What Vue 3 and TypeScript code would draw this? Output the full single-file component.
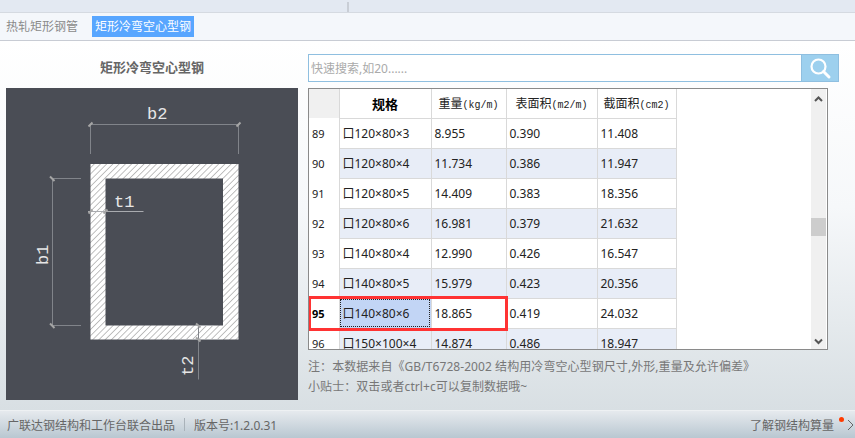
<template>
  <div class="app">
    <div class="top-strip"><span class="top-tick"></span></div>
    <div class="tabs">
      <span class="tab">热轧矩形钢管</span>
      <span class="tab active">矩形冷弯空心型钢</span>
    </div>

    <div class="main">
      <div class="left">
        <div class="title">矩形冷弯空心型钢</div>
        <div class="diagram">
          <svg width="292" height="312" viewBox="6 88 292 312">
            <defs>
              <pattern id="hatch" width="4.400" height="4.400" patternUnits="userSpaceOnUse" patternTransform="rotate(45)">
                <rect width="4.400" height="4.400" fill="#fff" />
                <line x1="2.200" y1="0" x2="2.200" y2="4.400" stroke="#b8b8b8" stroke-width="0.900" />
              </pattern>
            </defs>
            <path
              d="M90.500 164H238.500V339.500H90.500Z M105.500 178.500V325.500H223V178.500Z"
              fill="url(#hatch)"
              fill-rule="evenodd"
            />
            <g stroke="#81848a" stroke-width="1" fill="none">
              <path d="M90.500 124.500H238.500M90.500 124V154M238.500 124V154" />
              <path d="M52.500 178.500V325.500M52 178.500H81M52 325.500H81" />
              <path d="M88 211.500H143.500" stroke="#a9abaf" />
              <path d="M198.500 325V379.500" />
              <path d="M195 325.500H214M180 339.500H223" stroke="#a9abaf" />
            </g>
            <g stroke="#a5a5a5" stroke-width="2">
              <path d="M88.500 126.500L92.500 122.500M236.500 126.500L240.500 122.500" />
              <path d="M50 176.500L54.500 181M50 323.500L54.500 328" />
              <path d="M88.500 213.500L92.500 209.500M103.500 213.500L107.500 209.500" />
              <path d="M196 323.500L200.500 327.500M196 337.500L200.500 341.500" />
            </g>
            <g class="dim-text">
              <text x="147" y="119">b2</text>
              <text x="114" y="207">t1</text>
              <text transform="translate(48 265) rotate(-90)">b1</text>
              <text transform="translate(193 376) rotate(-90)">t2</text>
            </g>
          </svg>
        </div>
      </div>

      <div class="right">
        <div class="search">
          <input class="search-input" placeholder="快速搜索,如20......" />
          <button class="search-btn">
            <svg width="24" height="24" viewBox="0 0 24 24" fill="none" stroke="#fff">
              <circle cx="10.500" cy="10.500" r="7" stroke-width="2.200" />
              <path d="M15.500 15.500L21 21" stroke-width="3" stroke-linecap="round" />
            </svg>
          </button>
        </div>

        <div class="grid-box">
          <div class="grid-scroll">
            <table class="grid">
              <colgroup>
                <col class="c-no" />
                <col class="c-spec" />
                <col class="c-w" />
                <col class="c-s" />
                <col class="c-a" />
              </colgroup>
              <thead>
                <tr>
                  <th class="corner"></th>
                  <th class="spec-head">规格</th>
                  <th>重量<small>(kg/m)</small></th>
                  <th>表面积<small>(m2/m)</small></th>
                  <th>截面积<small>(cm2)</small></th>
                </tr>
              </thead>
              <tbody>
                <tr v-for="row in rows" :key="row.no" :class="{ alt: row.no % 2 === 0, current: row.no === 95 }">
                  <td class="no">{{ row.no }}</td>
                  <td class="spec">口{{ row.spec }}</td>
                  <td>{{ row.weight }}</td>
                  <td>{{ row.surface }}</td>
                  <td>{{ row.area }}</td>
                </tr>
              </tbody>
            </table>
            <div class="red-box"></div>
          </div>
          <div class="scrollbar">
            <svg class="arrow-up" width="15" height="15" viewBox="0 0 15 15" fill="none" stroke="#555" stroke-width="2">
              <path d="M4 10L7.500 6.500L11 10" />
            </svg>
            <div class="track"><div class="thumb"></div></div>
            <svg width="15" height="15" viewBox="0 0 15 15" fill="none" stroke="#555" stroke-width="2">
              <path d="M4 5.500L7.500 9L11 5.500" />
            </svg>
          </div>
        </div>

        <div class="notes">
          <div>注：本数据来自《GB/T6728-2002 结构用冷弯空心型钢尺寸,外形,重量及允许偏差》</div>
          <div>小贴士：双击或者ctrl+c可以复制数据哦~</div>
        </div>
      </div>
    </div>

    <div class="footer">
      <span>广联达钢结构和工作台联合出品</span>
      <span class="sep"></span>
      <span>版本号:1.2.0.31</span>
      <span class="more">
        了解钢结构算量
        <i class="dot"></i>
        <svg width="7" height="12" viewBox="0 0 7 12" fill="none" stroke="#666" stroke-width="1">
          <path d="M1 1L6 6L1 11" />
        </svg>
      </span>
    </div>
  </div>
</template>

<script setup lang="ts">
interface Row {
  no: number
  spec: string
  weight: string
  surface: string
  area: string
}

const rows: Row[] = [
  { no: 89, spec: '120×80×3', weight: '8.955', surface: '0.390', area: '11.408' },
  { no: 90, spec: '120×80×4', weight: '11.734', surface: '0.386', area: '11.947' },
  { no: 91, spec: '120×80×5', weight: '14.409', surface: '0.383', area: '18.356' },
  { no: 92, spec: '120×80×6', weight: '16.981', surface: '0.379', area: '21.632' },
  { no: 93, spec: '140×80×4', weight: '12.990', surface: '0.426', area: '16.547' },
  { no: 94, spec: '140×80×5', weight: '15.979', surface: '0.423', area: '20.356' },
  { no: 95, spec: '140×80×6', weight: '18.865', surface: '0.419', area: '24.032' },
  { no: 96, spec: '150×100×4', weight: '14.874', surface: '0.486', area: '18.947' }
]
</script>

<style>
html,
body {
  margin: 0;
  overflow: hidden;
}
</style>

<style scoped>
.app {
  width: 855px;
  height: 438px;
  display: flex;
  flex-direction: column;
  font-family: "Noto Sans", "Noto Sans CJK SC", sans-serif;
  font-size: 12px;
  color: #333;
  overflow: hidden;
}

.top-strip {
  height: 12px;
  flex: none;
  background: #e3e9f2;
  border-bottom: 1px solid #d5dae1;
  display: flex;
  justify-content: center;
  padding-right: 159px;
}

.top-tick {
  width: 2px;
  height: 10px;
  margin-top: 2px;
  background: #c9ced6;
}

.tabs {
  height: 27px;
  flex: none;
  display: flex;
  align-items: center;
  gap: 14px;
  padding-left: 6px;
  background: #f4f7fb;
  border-bottom: 1px solid #c8ccd4;
}

.tab {
  color: #8a8a8a;
  line-height: 21px;
}

.tab.active {
  padding: 0 3px;
  background: #58a6ff;
  color: #fff;
}

.main {
  flex: 1;
  min-height: 0;
  display: flex;
  background: linear-gradient(#fff 0%, #f6f8fa 45%, #d8dfe3 100%);
}

.left {
  width: 292px;
  margin-left: 6px;
  flex: none;
}

.title {
  height: 47px;
  line-height: 52px;
  text-align: center;
  font-size: 13px;
  font-weight: 700;
  color: #666;
}

.diagram {
  height: 312px;
  background: #4a4d55;
}

.diagram svg {
  display: block;
}

.dim-text text {
  font-family: "Liberation Mono", monospace;
  font-size: 17px;
  fill: #e6e6e6;
}

.right {
  margin-left: 10px;
  padding-top: 13px;
  width: 531px;
  flex: none;
}

.search {
  height: 28px;
  display: flex;
  box-sizing: border-box;
  border: 1px solid #8fbfe0;
  background: #fff;
}

.search-input {
  flex: 1;
  min-width: 0;
  border: 0;
  outline: 0;
  padding: 0 2px;
  font: inherit;
  background: transparent;
}

.search-input::placeholder {
  color: #aaa;
}

.search-btn {
  width: 37px;
  border: 0;
  border-left: 1px solid #8fbfe0;
  padding: 0;
  background: #9dd0ee;
  display: flex;
  align-items: center;
  justify-content: center;
}

.grid-box {
  margin-top: 6px;
  width: 520px;
  height: 262px;
  box-sizing: border-box;
  border: 1px solid #8a8a8a;
  background: #fff;
  display: flex;
}

.grid-scroll {
  position: relative;
  flex: 1;
  min-width: 0;
  overflow: hidden;
}

.grid {
  width: 367px;
  table-layout: fixed;
  border-collapse: collapse;
  color: #222;
}

.c-no {
  width: 30px;
}

.c-spec {
  width: 92px;
}

.c-w {
  width: 75px;
}

.c-s {
  width: 91px;
}

.c-a {
  width: 79px;
}

.grid th,
.grid td {
  height: 30px;
  padding: 0 0 0 3px;
  box-sizing: border-box;
  border: 1px solid #d9d9d9;
  white-space: nowrap;
}

.grid th {
  height: 29px;
  padding: 0;
  font-weight: 400;
  text-align: center;
  border-top: 0;
  border-bottom: 0;
}

.grid th small {
  font-family: "Liberation Mono", monospace;
  font-size: 10px;
}

.grid th.corner {
  background: #f0f0f0;
  border: 0;
}

.grid th.spec-head {
  font-weight: 700;
  color: #000;
  font-size: 13px;
}

.grid td.no {
  border-left: 0;
  border-top: 0;
  border-bottom: 0;
  border-right: 0;
  background: #fff;
  font-size: 11px;
}

.grid tr.alt td {
  background: #e8edf7;
}

.grid tr.alt td.no {
  background: #fff;
}

.grid tr.current td {
  background: #fff;
}

.grid tr.current td.no {
  font-weight: 700;
  color: #000;
}

.grid tr.current td.spec {
  background: #c2d5f5;
  outline: 1px dotted #222;
  outline-offset: -2px;
}

.red-box {
  position: absolute;
  left: -1px;
  top: 207px;
  width: 200px;
  height: 35px;
  box-sizing: border-box;
  border: 3px solid #ff3333;
  pointer-events: none;
}

.scrollbar {
  width: 15px;
  margin-right: 1px;
  flex: none;
  display: flex;
  flex-direction: column;
  background: #f0f0f0;
}

.scrollbar svg {
  flex: none;
  display: block;
}

.arrow-up {
  margin-top: 2px;
}

.track {
  flex: 1;
  padding-top: 112px;
}

.thumb {
  height: 18px;
  background: #cdcdcd;
}

.notes {
  margin-top: 7px;
  line-height: 20px;
  letter-spacing: 0.07px;
  color: #777;
  white-space: nowrap;
}

.footer {
  height: 28px;
  flex: none;
  display: flex;
  align-items: center;
  padding: 0 0 0 7px;
  box-sizing: border-box;
  border-top: 1px solid #eef1f3;
  background: linear-gradient(#e6eaee, #b9c7d1);
  color: #666;
}

.sep {
  width: 1px;
  height: 13px;
  margin: 0 9px;
  background: #a9b2b9;
}

.more {
  margin-left: auto;
  position: relative;
  display: flex;
  align-items: center;
  padding-right: 1px;
}

.more svg {
  margin-left: 13px;
}

.dot {
  position: absolute;
  left: 89px;
  top: 1px;
  width: 5px;
  height: 5px;
  border-radius: 50%;
  background: #ff3b00;
}
</style>
